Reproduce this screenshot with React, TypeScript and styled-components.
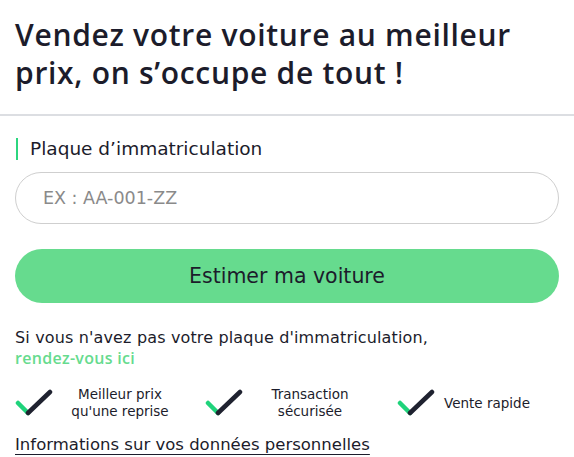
import React from "react";
import styled, { createGlobalStyle } from "styled-components";

const Global = createGlobalStyle`
  html, body { margin: 0; padding: 0; background: #fff; }
  body { font-family: "DejaVu Sans", "Open Sans", sans-serif; color: #1c1c2b; }
  * { box-sizing: border-box; }
`;

const Page = styled.div`
  width: 574px;
  display: flex;
  flex-direction: column;
`;

const Header = styled.header`
  padding: 16px 15px 22px 15px;
  border-bottom: 2px solid #dcdee2;
`;

const Title = styled.h1`
  margin: 0;
  font-family: "Open Sans", "DejaVu Sans", sans-serif;
  font-size: 30px;
  line-height: 38px;
  font-weight: 600;
  color: #1c1c2b;
  letter-spacing: 0.7px;
`;

const Form = styled.div`
  padding: 21px 15px 0 15px;
  display: flex;
  flex-direction: column;
`;

const Label = styled.label`
  display: flex;
  align-items: center;
  gap: 12px;
  font-size: 18.5px;
  line-height: 24px;
  color: #1c1c2b;
  margin-left: 1px;
  &::before {
    content: "";
    width: 2px;
    height: 22px;
    background: #2cd67f;
  }
`;

const Input = styled.input`
  margin-top: 11px;
  height: 52px;
  width: 100%;
  border: 1px solid #cfcfcf;
  border-radius: 26px;
  padding: 0 27px;
  font-family: inherit;
  font-size: 17.5px;
  color: #1c1c2b;
  outline: none;
  &::placeholder { color: #8a8a8a; }
`;

const Button = styled.button`
  margin-top: 25px;
  height: 54px;
  width: 100%;
  border: none;
  border-radius: 27px;
  background: #66db8e;
  font-family: inherit;
  font-size: 20.5px;
  font-weight: 400;
  color: #1c1c2b;
  cursor: pointer;
`;

const Note = styled.p`
  margin: 25px 0 0 0;
  font-size: 16px;
  line-height: 20px;
  letter-spacing: 0.15px;
  color: #1c1c2b;
`;

const Link = styled.a`
  font-family: "Open Sans", "DejaVu Sans", sans-serif;
  color: #66db8e;
  font-weight: 600;
  letter-spacing: 0.3px;
  text-decoration: none;
`;

const Features = styled.ul`
  list-style: none;
  margin: 17px 0 0 0;
  padding: 0;
  display: flex;
`;

const Feature = styled.li<{ $w?: number }>`
  display: flex;
  align-items: center;
  width: ${(p) => (p.$w ? `${p.$w}px` : "auto")};
  flex: ${(p) => (p.$w ? "none" : "1")};
`;

const FeatureText = styled.span<{ $left?: boolean }>`
  flex: ${(p) => (p.$left ? "1" : "none")};
  width: ${(p) => (p.$left ? "auto" : "134px")};
  margin-left: ${(p) => (p.$left ? "9px" : "0")};
  font-size: 13.5px;
  line-height: 17px;
  text-align: ${(p) => (p.$left ? "left" : "center")};
  color: #1c1c2b;
`;

const Info = styled.a`
  margin-top: 15px;
  align-self: flex-start;
  font-size: 16.5px;
  line-height: 20px;
  color: #1c1c2b;
  text-decoration: underline;
  text-underline-offset: 4px;
`;

const Check = () => (
  <svg width="38" height="28" viewBox="0 0 38 28" aria-hidden style={{ flex: "none" }}>
    <line x1="3" y1="14" x2="13" y2="24" stroke="#1fd37b" strokeWidth="4.5" strokeLinecap="round" />
    <line x1="13" y1="24" x2="35" y2="3" stroke="#1f2230" strokeWidth="4.5" strokeLinecap="round" />
  </svg>
);

export default function App() {
  return (
    <Page>
      <Global />
      <Header>
        <Title>Vendez votre voiture au meilleur prix, on s’occupe de tout !</Title>
      </Header>
      <Form>
        <Label>Plaque d’immatriculation</Label>
        <Input placeholder="EX : AA-001-ZZ" />
        <Button>Estimer ma voiture</Button>
        <Note>
          Si vous n'avez pas votre plaque d'immatriculation,
          <br />
          <Link href="#">rendez-vous ici</Link>
        </Note>
        <Features>
          <Feature $w={190}>
            <Check />
            <FeatureText>Meilleur prix<br />qu'une reprise</FeatureText>
          </Feature>
          <Feature $w={192}>
            <Check />
            <FeatureText>Transaction<br />sécurisée</FeatureText>
          </Feature>
          <Feature>
            <Check />
            <FeatureText $left>Vente rapide</FeatureText>
          </Feature>
        </Features>
        <Info href="#">Informations sur vos données personnelles</Info>
      </Form>
    </Page>
  );
}
